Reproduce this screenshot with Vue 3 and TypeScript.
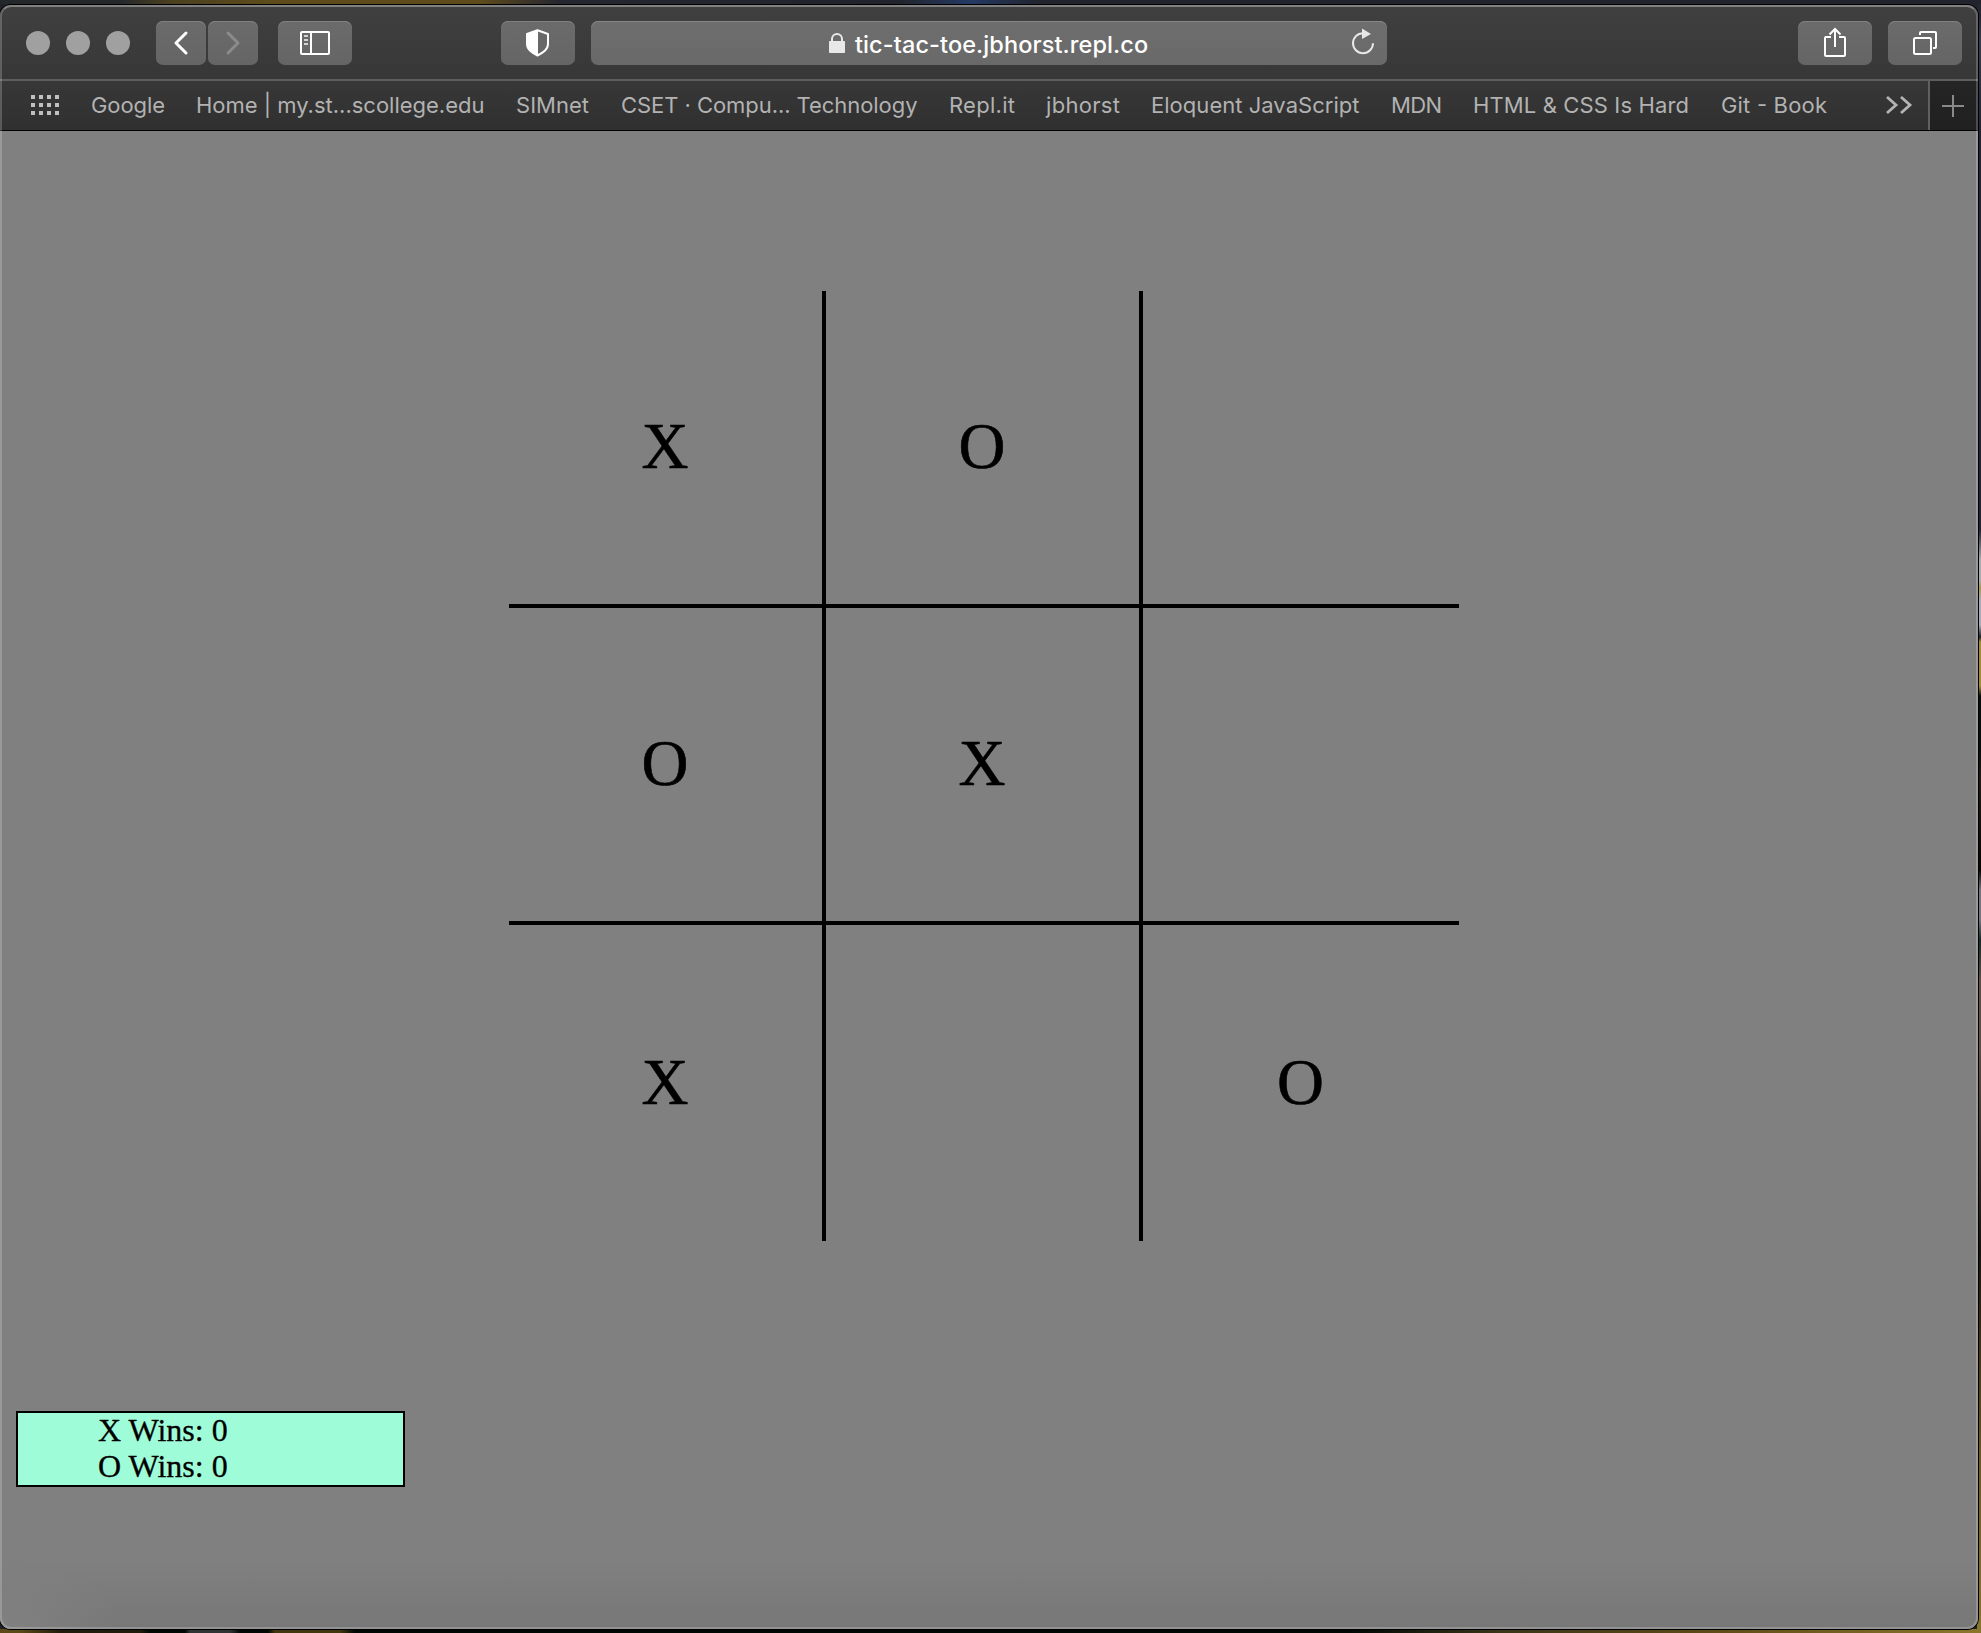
<script setup lang="ts">
interface Bookmark { label: string; width: number; gap: number }

// Width of each label and the gap that precedes it, in pixels
const bookmarks: Bookmark[] = [
  { label: 'Google', width: 74, gap: 31.5 },
  { label: 'Home | my.st...scollege.edu', width: 288.5, gap: 31.5 },
  { label: 'SIMnet', width: 73, gap: 31.5 },
  { label: 'CSET · Compu... Technology', width: 296.5, gap: 31.5 },
  { label: 'Repl.it', width: 66, gap: 32 },
  { label: 'jbhorst', width: 74, gap: 31 },
  { label: 'Eloquent JavaScript', width: 208.5, gap: 31 },
  { label: 'MDN', width: 51, gap: 31.5 },
  { label: 'HTML & CSS Is Hard', width: 216, gap: 31 },
  { label: 'Git - Book', width: 106, gap: 32 },
]

const cells: string[] = ['X', 'O', '', 'O', 'X', '', 'X', '', 'O']
const scores = [
  { player: 'X', wins: 0 },
  { player: 'O', wins: 0 },
]
</script>

<template>
  <div class="desktop">
    <div class="window">
      <header class="toolbar">
        <div class="lights"><i></i><i></i><i></i></div>
        <button class="btn back">
          <svg width="50" height="44" viewBox="0 0 50 44"><path d="M30 12 20 22l10 10" fill="none" stroke="#fff" stroke-width="3" stroke-linecap="round" stroke-linejoin="round" /></svg>
        </button>
        <button class="btn forward">
          <svg width="50" height="44" viewBox="0 0 50 44"><path d="M20 12l10 10-10 10" fill="none" stroke="#8b8b8b" stroke-width="3" stroke-linecap="round" stroke-linejoin="round" /></svg>
        </button>
        <button class="btn wide side">
          <svg width="74" height="44" viewBox="0 0 74 44"><rect x="23" y="11" width="28" height="22" rx="1" fill="none" stroke="#fff" stroke-width="2" /><path d="M33 11v22" stroke="#fff" stroke-width="2" /><path d="M26 15h4M26 19h4M26 23h4" stroke="#d2d2d2" stroke-width="2" /></svg>
        </button>
        <button class="btn wide shield">
          <svg width="74" height="44" viewBox="0 0 74 44"><path d="M36.5 9.200l10.500 3.800v10c0 5.500-5 8.500-10.500 11.500C31 31.500 26 28.500 26 23V13z" fill="none" stroke="#fff" stroke-width="2" stroke-linejoin="round" /><path d="M37 9 26 13v10c0 5.500 5 8.500 11 11.500z" fill="#fff" /></svg>
        </button>
        <div class="address">
          <svg class="lock" width="16" height="20" viewBox="0 0 16 20"><path d="M3 9V6a5 5 0 0 1 10 0v3" fill="none" stroke="#e8e8e8" stroke-width="2" /><rect y="8" width="16" height="12" rx=".7" fill="#e8e8e8" /></svg>
          <span class="url">tic-tac-toe.jbhorst.repl.co</span>
          <svg class="reload" width="24" height="28" viewBox="0 0 24 28"><path d="M12 5.200a10 10 0 1 0 10 10" fill="none" stroke="#e8e8e8" stroke-width="2" /><path d="M11 .500 20 6l-9 5z" fill="#e8e8e8" /></svg>
        </div>
        <button class="btn wide share">
          <svg width="74" height="44" viewBox="0 0 74 44"><path d="M33 16h-5q-1 0-1 1v17q0 1 1 1h18q1 0 1-1V17q0-1-1-1h-5M37 26V8M31.500 13.500 37 8l5.500 5.500" fill="none" stroke="#fff" stroke-width="2" /></svg>
        </button>
        <button class="btn wide tabs">
          <svg width="74" height="44" viewBox="0 0 74 44"><rect x="26" y="17" width="17" height="16" rx="1.500" fill="none" stroke="#fff" stroke-width="2" /><path d="M32 14v-2q0-1 1-1h14q1 0 1 1v14q0 1-1 1h-2" fill="none" stroke="#fff" stroke-width="2" /></svg>
        </button>
      </header>

      <nav class="bookmarks">
        <svg class="apps" width="28" height="20" viewBox="0 0 28 20"><path d="M0 2h28M0 10h28M0 18h28" stroke="#c0c0c0" stroke-width="4" stroke-dasharray="4 4" /></svg>
        <svg
          v-for="b in bookmarks" :key="b.label" class="bookmark" height="40"
          :width="b.width" :style="{ marginLeft: b.gap + 'px' }"
        ><text x="0" y="28" :textLength="b.width">{{ b.label }}</text></svg>
        <svg class="more" width="28" height="20" viewBox="0 0 28 20"><path d="M2 2l9 8-9 8M16 2l9 8-9 8" fill="none" stroke="#b4b4b4" stroke-width="2.800" /></svg>
        <div class="newtab">
          <svg width="22" height="22" viewBox="0 0 22 22"><path d="M11 0v22M0 11h22" stroke="#8a8a8a" stroke-width="2" /></svg>
        </div>
      </nav>

      <main class="page">
        <div class="board">
          <div v-for="(mark, i) in cells" :key="i" class="cell"><span>{{ mark }}</span></div>
        </div>
        <div class="score">
          <div v-for="s in scores" :key="s.player">{{ s.player }} Wins: {{ s.wins }}</div>
        </div>
      </main>
    </div>
  </div>
</template>

<style>
body { margin: 0; background: #202129; }
</style>

<style scoped>
* { box-sizing: border-box; }
.desktop {
  width: 1981px; height: 1633px; padding: 5px 3px 4px 0; overflow: hidden;
  background:
    linear-gradient(90deg, #25282b 0 120px, #4a4020 170px, #5d4b1b 270px 480px, #252630 560px, #22242d 900px, #243963 970px, #22242d 1040px) 0 0 / 100% 4px no-repeat,
    linear-gradient(90deg, #5b4917 0 20px, #201b0b 60px 140px, #000804 150px 185px, #303434 190px 230px, #000804 240px 268px, #40370f 275px 340px, #000804 355px 1350px, #3a3519 1500px, #5b4917 1700px, #8a762d 1981px) 0 100% / 100% 4px no-repeat,
    linear-gradient(180deg, #242833 0 15px, #343d50 40px, #222633 130px 530px, #a9acae 560px 580px, #a69a4b 588px, #a9abb6 600px 625px, #1c2325 637px, #a28c35 642px 686px, #050f0c 696px 750px, #211a13 780px, #080704 870px, #74747f 890px 920px, #172c28 940px, #5c5047 980px 1050px, #17130d 1250px, #6a581f 1450px, #8a762d) 100% 0 / 4px 100% no-repeat,
    #202129;
}
.window {
  width: 1978px; height: 1624px; position: relative; border-radius: 11px;
  overflow: hidden; display: flex; flex-direction: column; background: #808080;
  box-shadow: 0 0 0 1px #000;
}
.window::after {
  content: ''; position: absolute; inset: 0; border: 2px solid rgba(255, 255, 255, .2);
  border-top-color: rgba(255, 255, 255, .34);
  border-radius: 11px; pointer-events: none;
}
.toolbar {
  height: 76px; flex: none; display: flex; align-items: flex-start;
  padding: 16px 16px 0 26px; border-bottom: 2px solid #5e5e5e;
  background: linear-gradient(#404040, #373737);
}
.lights { display: flex; gap: 16px; margin-top: 10px; }
.lights i { width: 24px; height: 24px; border-radius: 50%; background: #a0a0a0; }
.btn {
  width: 50px; height: 44px; padding: 0; border: 0; border-radius: 7px; flex: none;
  background: linear-gradient(#6b6b6b, #656565); box-shadow: inset 0 1px #818181;
}
.btn svg { display: block; }
.wide { width: 74px; }
.back { margin-left: 26px; }
.forward { margin-left: 2px; }
.side { margin-left: 20px; }
.shield { margin-left: 149px; }
.address {
  width: 796px; height: 44px; flex: none; margin-left: 16px; border-radius: 7px;
  background: linear-gradient(#6e6e6e, #696969); box-shadow: inset 0 1px #868686;
  display: flex; align-items: flex-start; padding-left: 238px;
}
.lock { margin-top: 12px; }
.url {
  font: 500 23.500px/44px Inter, sans-serif; color: #fff; margin-left: 10px; width: 294px;
  letter-spacing: .1px; white-space: nowrap; padding-top: 2px;
}
.reload { margin: 7px 0 0 202px; }
.share { margin-left: auto; }
.tabs { margin-left: 16px; }
.bookmarks {
  height: 50px; flex: none; display: flex; align-items: flex-start; padding-left: 31px;
  background: linear-gradient(#373737, #303030); border-bottom: 1px solid #000;
}
.apps { margin-top: 14px; flex: none; }
.bookmark { flex: none; margin-top: 4px; overflow: visible; }
.bookmark text { font: 400 22px Inter, sans-serif; fill: #b2b2b2; }
.more { margin: 14px 0 0 58px; flex: none; }
.newtab {
  width: 50px; height: 49px; margin-left: auto; border-left: 2px solid #606060;
  background: linear-gradient(#252525, #202020); padding: 14px 0 0 12px;
}
.newtab svg { display: block; }
.page {
  flex: 1; display: flex; flex-direction: column; align-items: flex-start;
  background:
    radial-gradient(120px 90px at 0 100%, #808080 10%, transparent),
    linear-gradient(transparent calc(100% - 70px), rgba(0, 0, 0, .07)), #808080;
}
.board {
  margin: 160px 0 0 509px; width: 950px; height: 950px; display: grid;
  grid-template: 317px 317px 316px / 317px 317px 316px;
}
.cell {
  display: flex; align-items: center; justify-content: center; border: 0 solid #000;
  padding: 0 1px 2px 0;
  font: 65px/1 "Liberation Serif", "Times New Roman", serif; color: #000;
  -webkit-text-stroke: .6px #000;
}
.cell:not(:nth-child(3n)) { border-right-width: 4px; }
.cell:nth-child(-n+6) { border-bottom-width: 4px; }
.score {
  width: 389px; height: 76px; margin: 170px 0 0 16px; border: 2px solid #000;
  background: #9ffcd8; padding-left: 80px; color: #000;
  font: 32px/36px "Liberation Serif", "Times New Roman", serif;
  -webkit-text-stroke: .3px #000;
}
.score div { height: 36px; line-height: 34px; }
</style>
